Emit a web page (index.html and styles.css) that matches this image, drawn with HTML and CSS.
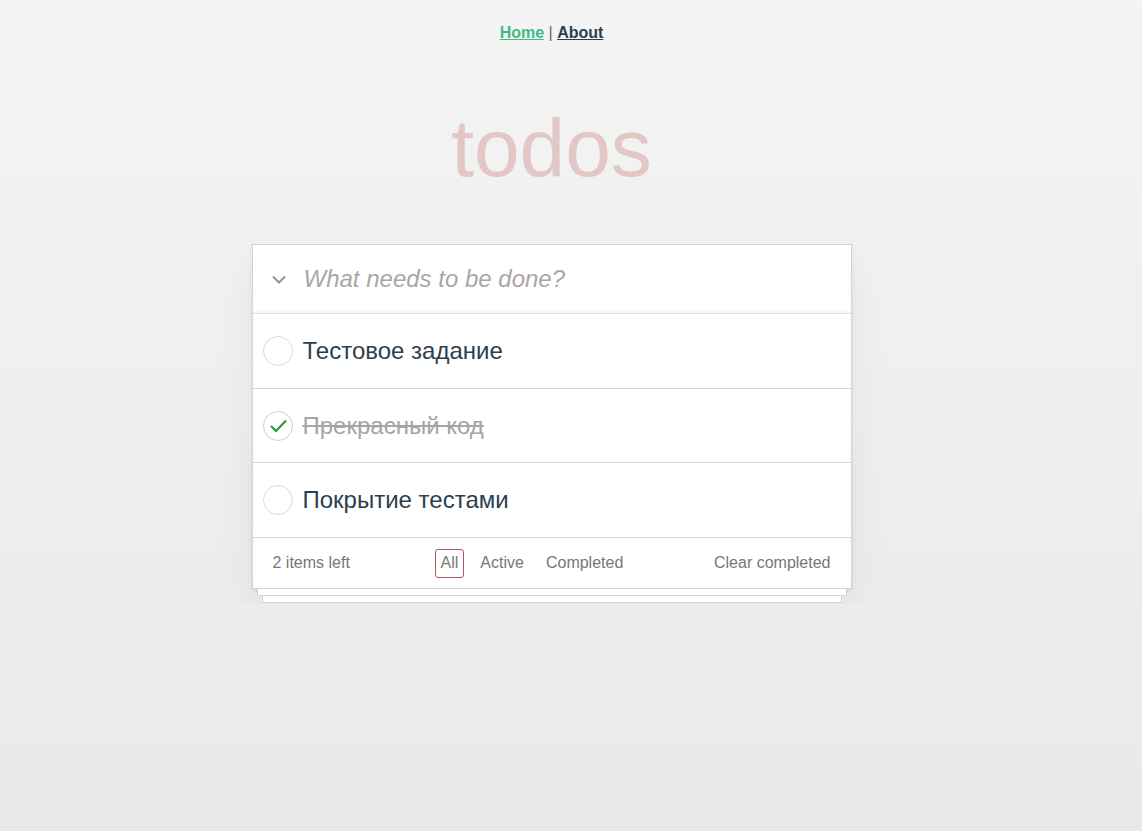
FILE: index.html
```html
<!DOCTYPE html>
<html lang="en">
<head>
<meta charset="utf-8">
<title>todos</title>
<link rel="stylesheet" href="styles.css">
</head>
<body>
<div class="app">
  <nav class="nav">
    <a href="#" class="nav-link active">Home</a> | <a href="#" class="nav-link">About</a>
  </nav>
  <h1 class="title">todos</h1>
  <section class="todoapp">
    <header class="header">
      <span class="toggle-all">
        <svg width="14" height="9" viewBox="0 0 14 9"><polyline points="1,1.5 7,7.5 13,1.5" fill="none" stroke="#949494" stroke-width="2"/></svg>
      </span>
      <input class="new-todo" type="text" placeholder="What needs to be done?">
    </header>
    <ul class="todo-list">
      <li class="todo">
        <span class="check">
          <svg width="30" height="30" viewBox="0 0 30 30"><circle cx="15" cy="15" r="14.5" fill="none" stroke="#dadada" stroke-width="1"/></svg>
        </span>
        <span class="label">Тестовое задание</span>
      </li>
      <li class="todo done">
        <span class="check">
          <svg width="30" height="30" viewBox="0 0 30 30"><circle cx="15" cy="15" r="14.5" fill="none" stroke="#cfcfcf" stroke-width="1"/><polyline points="8,15 13,20 23,9.5" fill="none" stroke="#1f9a2a" stroke-width="2"/></svg>
        </span>
        <span class="label">Прекрасный код</span>
      </li>
      <li class="todo">
        <span class="check">
          <svg width="30" height="30" viewBox="0 0 30 30"><circle cx="15" cy="15" r="14.5" fill="none" stroke="#dadada" stroke-width="1"/></svg>
        </span>
        <span class="label">Покрытие тестами</span>
      </li>
    </ul>
    <footer class="footer">
      <span class="count">2 items left</span>
      <ul class="filters">
        <li><a href="#" class="filter selected">All</a></li>
        <li><a href="#" class="filter">Active</a></li>
        <li><a href="#" class="filter">Completed</a></li>
      </ul>
      <button class="clear">Clear completed</button>
    </footer>
  </section>
  <div class="sheet sheet-one"></div>
  <div class="sheet sheet-two"></div>
</div>
</body>
</html>
```
FILE: styles.css
```css
html {
  min-height: 100%;
  background: linear-gradient(#f4f4f4, #e9e9e9);
}
body {
  margin: 0;
  font-family: "Liberation Sans", Arial, Helvetica, sans-serif;
  color: #2c3e50;
}
.app {
  width: 1103px;
  display: flex;
  flex-direction: column;
  align-items: center;
}
.nav {
  padding-top: 24px;
  font-size: 16px;
  line-height: 18px;
  color: #666;
}
.nav-link {
  font-weight: bold;
  color: #2c3e50;
}
.nav-link.active {
  color: #42b983;
}
.title {
  margin: 65px 0 0;
  font-size: 82px;
  line-height: 82px;
  font-weight: normal;
  color: rgba(175, 47, 47, 0.22);
}
.todoapp {
  margin-top: 55px;
  width: 598px;
  background: #fff;
  border: 1px solid #d4d4d4;
  box-shadow: 0 2px 4px rgba(0, 0, 0, 0.08), 0 20px 40px rgba(0, 0, 0, 0.05);
}
.sheet {
  background: #fff;
  border: 1px solid #d2d2d2;
  border-top: 0;
  height: 6px;
}
.sheet-one {
  width: 588px;
}
.sheet-two {
  width: 578px;
}
.header {
  height: 68px;
  display: flex;
  align-items: center;
  border-bottom: 1px solid #dcdcdc;
  box-shadow: inset 0 -2px 1px rgba(0, 0, 0, 0.03);
}
.toggle-all {
  width: 50px;
  display: flex;
  justify-content: center;
  padding-left: 1px;
  padding-top: 1px;
}
.new-todo {
  flex: 1;
  border: 0;
  outline: none;
  background: transparent;
  font-family: inherit;
  font-size: 24px;
  padding: 0;
  color: #2c3e50;
}
.new-todo::placeholder {
  font-style: italic;
  color: #aaa6a6;
}
.todo-list {
  list-style: none;
  margin: 0;
  padding: 0;
}
.todo {
  height: 74px;
  display: flex;
  align-items: center;
  gap: 10px;
  padding-left: 10px;
  border-bottom: 1px solid #d6d6d6;
}
.todo:nth-child(2) {
  height: 73px;
}
.check {
  display: flex;
  width: 30px;
  height: 30px;
}
.label {
  font-size: 24px;
  line-height: 30px;
  color: #2c3e50;
}
.todo.done .label {
  color: #a5a5a5;
  text-decoration: line-through;
}
.footer {
  height: 50px;
  display: flex;
  align-items: center;
  justify-content: space-between;
  padding: 0 20px;
  font-size: 16px;
  color: #777;
}
.count {
  line-height: 18px;
}
.filters {
  list-style: none;
  margin: 0;
  padding: 0;
  display: flex;
  gap: 10px;
}
.filter {
  display: block;
  padding: 4px 5px 5px;
  line-height: 18px;
  border: 1px solid transparent;
  border-radius: 3px;
  color: #777;
  text-decoration: none;
}
.filter.selected {
  border-color: #b0585a;
}
.clear {
  border: 0;
  background: none;
  padding: 0;
  font-family: inherit;
  font-size: 16px;
  line-height: 18px;
  color: #777;
}
```
